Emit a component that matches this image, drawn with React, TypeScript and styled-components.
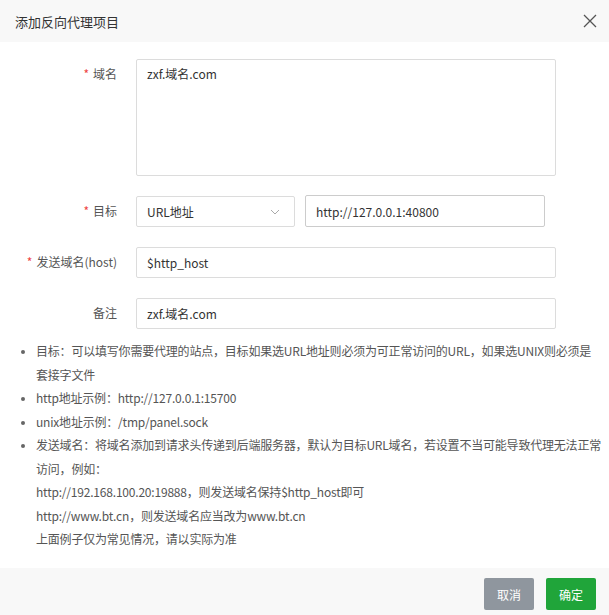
import React from "react";
import styled, { createGlobalStyle } from "styled-components";

const Global = createGlobalStyle`
  html, body { margin: 0; padding: 0; background: #fff; }
  body { font-family: "Noto Sans CJK SC", "Liberation Sans", sans-serif; font-size: 12px; color: #555; }
  * { box-sizing: border-box; }
`;

const Dialog = styled.div`
  width: 609px; height: 615px; display: flex; flex-direction: column; background: #fff;
`;
const Header = styled.div`
  height: 42px; background: #f8f8f8; display: flex; align-items: center; justify-content: space-between;
  padding: 0 12px 0 15px; font-size: 13px; color: #333;
`;
const Close = styled.svg` width: 14px; height: 14px; `;
const Body = styled.div` flex: 1; padding: 17px 0 0 0; `;
const Row = styled.div<{ $mb: number }>`
  display: flex; align-items: flex-start; margin-bottom: ${p => p.$mb}px;
`;
const Label = styled.div`
  width: 117px; text-align: right; padding-top: 7px; margin-right: 19px;
  font-size: 12px; color: #555; line-height: 16px; white-space: nowrap;
`;
const Star = styled.span` color: #e44; margin-right: 4px; `;
const Box = styled.div<{ $w: number; $h: number; $top?: boolean; $dark?: boolean }>`
  width: ${p => p.$w}px; height: ${p => p.$h}px; border: 1px solid ${p => (p.$dark ? "#ccc" : "#dcdcdc")};
  border-radius: 2px; margin-top: ${p => (p.$dark ? -1 : 0)}px;
  padding: ${p => (p.$top ? "5px 10px" : "0 10px")}; display: flex;
  align-items: ${p => (p.$top ? "flex-start" : "center")}; justify-content: space-between;
  font-size: 12px; color: #333; font-family: "Noto Sans CJK SC", "Liberation Sans", sans-serif;
`;
const Gap = styled.div` width: 10px; `;
const Chevron = styled.svg` width: 12px; height: 12px; margin-right: 3px; `;
const List = styled.ul`
  margin: 10px 0 0 0; padding: 0 8px 0 36px; font-size: 12px; color: #555; line-height: 23.5px;
  letter-spacing: -0.2px;
  li::marker { color: #666; font-size: 10px; }
`;
const Footer = styled.div`
  height: 47px; background: #f8f8f8; display: flex; justify-content: flex-end; align-items: flex-start;
  padding: 10px 13px 0 0; gap: 12px;
`;
const Btn = styled.button<{ $bg: string }>`
  width: 50px; height: 32px; border: none; border-radius: 2px; background: ${p => p.$bg}; color: #fff;
  font-size: 12px; font-family: "Noto Sans CJK SC", sans-serif; padding: 0;
`;

export default function App() {
  return (
    <Dialog>
      <Global />
      <Header>
        <span>添加反向代理项目</span>
        <Close viewBox="0 0 14 14"><path d="M1 1L13 13M13 1L1 13" stroke="#555" strokeWidth="1.3" /></Close>
      </Header>
      <Body>
        <Row $mb={20}>
          <Label><Star>*</Star>域名</Label>
          <Box $w={420} $h={117} $top>zxf.域名.com</Box>
        </Row>
        <Row $mb={20}>
          <Label><Star>*</Star>目标</Label>
          <Box $w={159} $h={31}>URL地址
            <Chevron viewBox="0 0 12 12"><path d="M2 4L6 8L10 4" fill="none" stroke="#aaa" strokeWidth="1" /></Chevron>
          </Box>
          <Gap />
          <Box $w={240} $h={32} $dark>http://127.0.0.1:40800</Box>
        </Row>
        <Row $mb={20}>
          <Label><Star>*</Star>发送域名(host)</Label>
          <Box $w={420} $h={31}>$http_host</Box>
        </Row>
        <Row $mb={0}>
          <Label>备注</Label>
          <Box $w={420} $h={31}>zxf.域名.com</Box>
        </Row>
        <List>
          <li>目标：可以填写你需要代理的站点，目标如果选URL地址则必须为可正常访问的URL，如果选UNIX则必须是套接字文件</li>
          <li>http地址示例：http://127.0.0.1:15700</li>
          <li>unix地址示例：/tmp/panel.sock</li>
          <li>发送域名：将域名添加到请求头传递到后端服务器，默认为目标URL域名，若设置不当可能导致代理无法正常访问，例如：<br />
            http://192.168.100.20:19888，则发送域名保持$http_host即可<br />
            http://www.bt.cn，则发送域名应当改为www.bt.cn<br />
            上面例子仅为常见情况，请以实际为准</li>
        </List>
      </Body>
      <Footer>
        <Btn $bg="#8f969e">取消</Btn>
        <Btn $bg="#20a53a">确定</Btn>
      </Footer>
    </Dialog>
  );
}
